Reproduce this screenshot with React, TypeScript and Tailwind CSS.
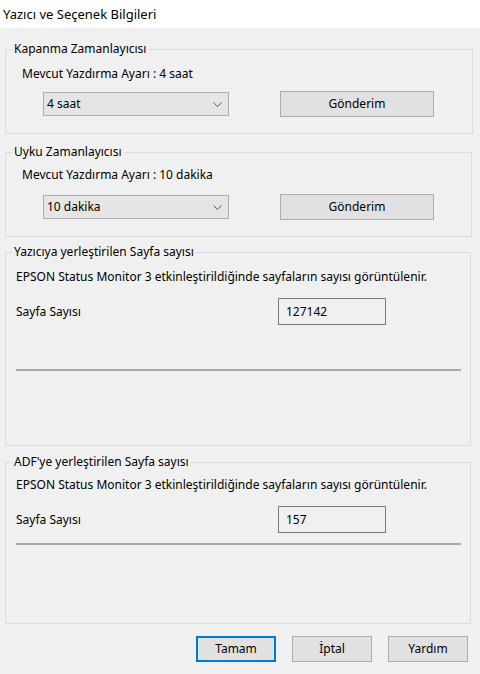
import type { ReactNode } from 'react'

function GroupBox({ title, className, children }: { title: string; className: string; children: ReactNode }) {
  return (
    <fieldset className={`ml-[5px] border border-[#dcdcdc] p-0 ${className}`}>
      <legend className="ml-[6px] px-[2px] leading-[16px]">{title}</legend>
      {children}
    </fieldset>
  )
}

function SelectBox({ value }: { value: string }) {
  return (
    <div className="flex h-[24px] w-[186px] items-center justify-between border border-[#adadad] bg-[#e5e5e5] pl-[3px] pr-[6px]">
      <span>{value}</span>
      <svg width="9" height="5" viewBox="0 0 9 5" fill="none">
        <path d="M0.5 0.5 L4.5 4.5 L8.5 0.5" stroke="#5a5a5a" strokeWidth="1" />
      </svg>
    </div>
  )
}

function PushButton({ label, focused, className }: { label: string; focused?: boolean; className: string }) {
  return (
    <button
      className={`flex h-[26px] items-center justify-center bg-[#e1e1e1] ${
        focused ? 'border-2 border-[#0078d7]' : 'border border-[#adadad]'
      } ${className}`}
    >
      {label}
    </button>
  )
}

function TimerGroup({
  current,
  value,
  textTop,
  rowTop,
}: {
  current: string
  value: string
  textTop: string
  rowTop: string
}) {
  return (
    <>
      <div className={`pl-[16px] ${textTop}`}>Mevcut Yazdırma Ayarı : {current}</div>
      <div className={`flex items-center pb-[16px] pl-[37px] ${rowTop}`}>
        <SelectBox value={value} />
        <PushButton label="Gönderim" className="ml-[51px] w-[154px]" />
      </div>
    </>
  )
}

function CountGroup({ count, sepTop, bottom }: { count: string; sepTop: string; bottom: string }) {
  return (
    <div className={`pl-[10px] ${bottom}`}>
      <div>EPSON Status Monitor 3 etkinleştirildiğinde sayfaların sayısı görüntülenir.</div>
      <div className="mt-[13px] flex items-center">
        <span className="w-[262px]">Sayfa Sayısı</span>
        <div className="flex h-[27px] w-[108px] items-center border border-[#7a7a7a] bg-[#f0f0f0] pl-[7px]">
          {count}
        </div>
      </div>
      <div className={`mr-[9px] h-[2px] bg-[#a9a9a9] ${sepTop}`} />
    </div>
  )
}

export default function App() {
  return (
    <div className="flex h-[674px] w-[480px] flex-col bg-[#f0f0f0] font-['Noto_Sans',sans-serif] text-[12px] leading-[16px] text-black">
      {/* Title bar */}
      <div className="flex h-[28px] items-center bg-white pl-[3px] text-[13px]">Yazıcı ve Seçenek Bilgileri</div>

      <GroupBox title="Kapanma Zamanlayıcısı" className="mt-[13px] w-[468px]">
        <TimerGroup current="4 saat" value="4 saat" textTop="mt-[9px]" rowTop="mt-[9px]" />
      </GroupBox>

      <GroupBox title="Uyku Zamanlayıcısı" className="mt-[10px] w-[467px]">
        <TimerGroup current="10 dakika" value="10 dakika" textTop="mt-[7px]" rowTop="mt-[11px]" />
      </GroupBox>

      <GroupBox title="Yazıcıya yerleştirilen Sayfa sayısı" className="mt-[7px] w-[466px]">
        <div className="mt-[9px]">
          <CountGroup count="127142" sepTop="mt-[44px]" bottom="pb-[74px]" />
        </div>
      </GroupBox>

      <GroupBox title="ADF'ye yerleştirilen Sayfa sayısı" className="mt-[8px] w-[466px]">
        <div className="mt-[7px]">
          <CountGroup count="157" sepTop="mt-[10px]" bottom="pb-[78px]" />
        </div>
      </GroupBox>

      {/* Dialog buttons */}
      <div className="mt-[12px] flex justify-end gap-[16px] pr-[12px]">
        <PushButton label="Tamam" focused className="w-[80px]" />
        <PushButton label="İptal" className="w-[80px]" />
        <PushButton label="Yardım" className="w-[80px]" />
      </div>
    </div>
  )
}
